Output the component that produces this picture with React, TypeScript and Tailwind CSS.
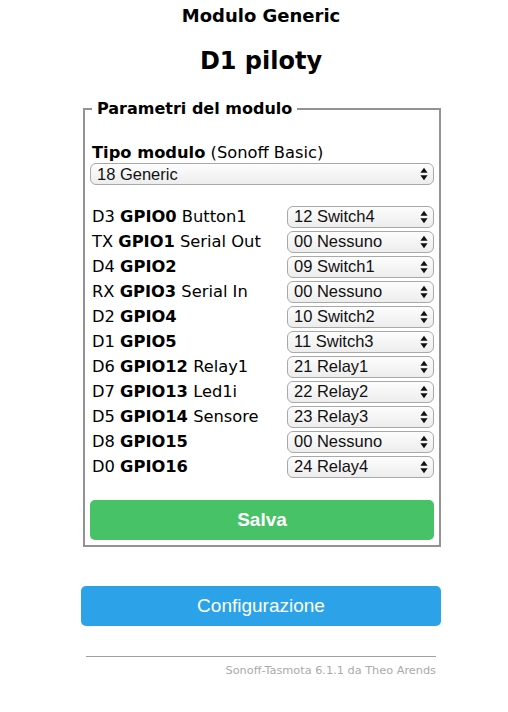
import React from "react";

const rows: [string, string, string, string][] = [
  ["D3", "GPIO0", "Button1", "12 Switch4"],
  ["TX", "GPIO1", "Serial Out", "00 Nessuno"],
  ["D4", "GPIO2", "", "09 Switch1"],
  ["RX", "GPIO3", "Serial In", "00 Nessuno"],
  ["D2", "GPIO4", "", "10 Switch2"],
  ["D1", "GPIO5", "", "11 Switch3"],
  ["D6", "GPIO12", "Relay1", "21 Relay1"],
  ["D7", "GPIO13", "Led1i", "22 Relay2"],
  ["D5", "GPIO14", "Sensore", "23 Relay3"],
  ["D8", "GPIO15", "", "00 Nessuno"],
  ["D0", "GPIO16", "", "24 Relay4"],
];

function Arrows() {
  return (
    <svg width="8" height="14" viewBox="0 0 8 14" className="shrink-0">
      <path d="M4 0.8 L7.6 5.8 L0.4 5.8 Z" fill="#111" />
      <path d="M4 13.2 L7.6 8.2 L0.4 8.2 Z" fill="#111" />
    </svg>
  );
}

function Sel({ text, className }: { text: string; className: string }) {
  return (
    <div
      className={
        "flex items-center justify-between rounded-[6px] border border-[#a9a9a9] bg-gradient-to-b from-[#fdfdfd] to-[#ededed] pl-[6px] pr-[5px] text-[16.5px] leading-none text-[#111] [font-family:'Liberation_Sans',Arial,sans-serif] " +
        className
      }
    >
      <span>{text}</span>
      <Arrows />
    </div>
  );
}

export default function App() {
  return (
    <div className="min-h-[712px] w-[508px] bg-white text-black [font-family:'DejaVu_Sans',Verdana,sans-serif]">
      <div className="ml-[81px] w-[360px] pt-[5px]">
        <div className="text-center text-[18px] font-bold leading-[22px]">Modulo Generic</div>
        <div className="mt-[19px] text-center text-[24px] font-bold leading-[30px]">D1 piloty</div>
        <fieldset className="ml-[2px] mt-[23px] w-[358px] border-2 border-[#939393] px-[5px] pb-[5px] pt-0">
          <legend className="ml-[2px] px-[5px] text-[16px] font-bold leading-[20px]">
            Parametri del modulo
          </legend>
          <div className="mt-[24px] pl-[2px] text-[16.3px] leading-[20px]">
            <b>Tipo modulo</b> (Sonoff Basic)
          </div>
          <Sel text="18 Generic" className="h-[22px] w-full" />
          <div className="mt-[19px] flex flex-col">
            {rows.map(([d, g, n, v]) => (
              <div key={g} className="flex h-[25px] items-center justify-between">
                <div className="pl-[2px] text-[16.3px] leading-[20px]">
                  {d} <b>{g}</b>
                  {n ? " " + n : ""}
                </div>
                <Sel text={v} className="h-[22px] w-[147px]" />
              </div>
            ))}
          </div>
          <button className="mt-[21px] flex h-[40px] w-full items-center justify-center rounded-[5px] bg-[#47c266] text-[19px] font-bold text-white [font-family:'Liberation_Sans',Arial,sans-serif]">
            Salva
          </button>
        </fieldset>
        <button className="mt-[39px] flex h-[40px] w-[360px] items-center justify-center rounded-[5px] bg-[#2ca3e8] text-[19px] text-white [font-family:'Liberation_Sans',Arial,sans-serif]">
          Configurazione
        </button>
        <div className="mx-[5px] mt-[30px] border-t border-[#a0a0a0]" />
        <div className="mr-[5px] mt-[7px] text-right text-[11.3px] leading-[14px] text-[#aaa]">
          Sonoff-Tasmota 6.1.1 da Theo Arends
        </div>
      </div>
    </div>
  );
}
